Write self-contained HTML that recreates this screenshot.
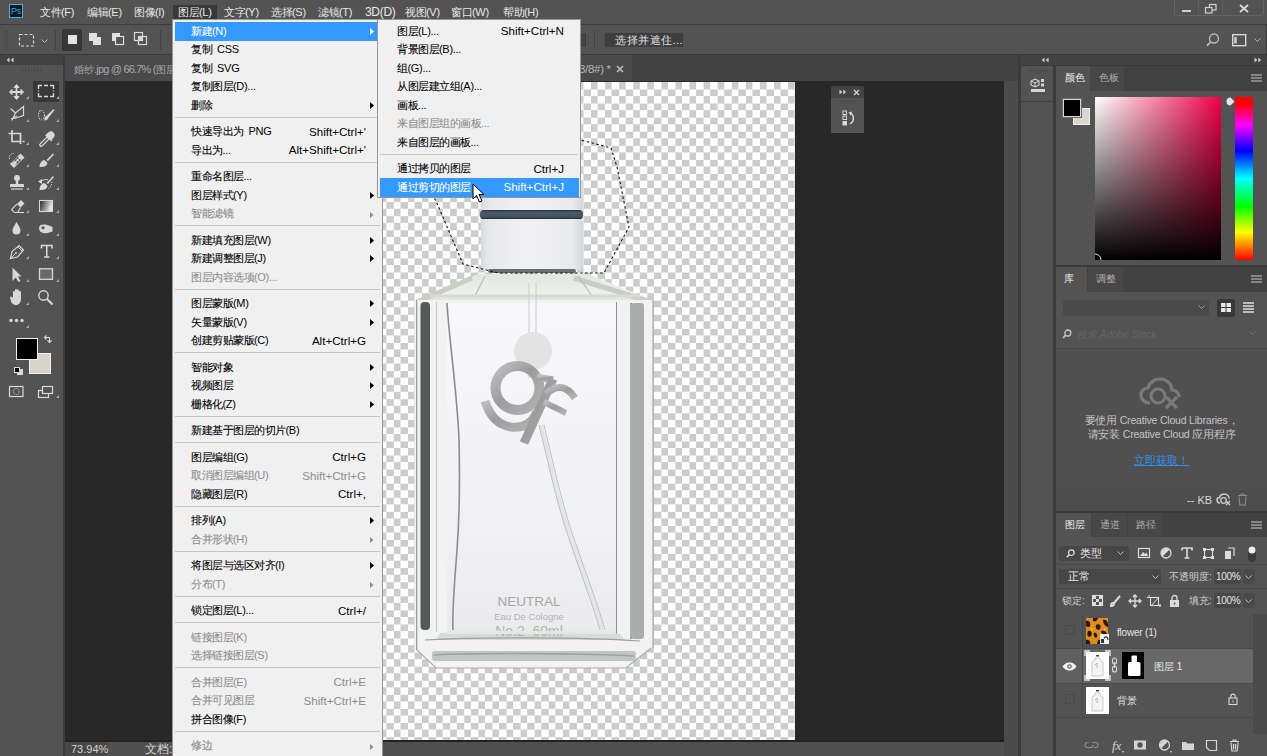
<!DOCTYPE html>
<html><head><meta charset="utf-8">
<style>
*{margin:0;padding:0;box-sizing:border-box}
html,body{width:1267px;height:756px;overflow:hidden;background:#282828;font-family:"Liberation Sans",sans-serif;font-size:12px;color:#dcdcdc}
body{position:relative}
.a{position:absolute}
svg{position:absolute;overflow:visible}
.mb{position:absolute;top:5px;height:14px;line-height:14px;color:#e8e8e8;font-size:11px;letter-spacing:-0.5px;white-space:nowrap}
.mb i{font-style:normal;font-size:11px;letter-spacing:-0.3px}
.cj{font-size:10.6px}
</style></head>
<body>

<!-- menubar -->
<div class="a" style="left:0;top:0;width:1267px;height:24px;background:#535353"></div>
<div class="a" style="left:0;top:24px;width:1267px;height:1px;background:#3d3d3d"></div>
<div class="a" style="left:9px;top:4px;width:14px;height:14px;background:#001a30;border:1px solid #58aed0"></div>
<div class="a" style="left:9px;top:4px;width:14px;height:14px;color:#48a8d4;font-size:9px;line-height:14px;text-align:center;letter-spacing:-0.2px">Ps</div>
<div class="a" style="left:173px;top:5px;width:44px;height:14px;background:#383838"></div>
<div class="mb" style="left:40px">文件<i>(F)</i></div>
<div class="mb" style="left:87px">编辑<i>(E)</i></div>
<div class="mb" style="left:134px">图像<i>(I)</i></div>
<div class="mb" style="left:178px">图层<i>(L)</i></div>
<div class="mb" style="left:224px">文字<i>(Y)</i></div>
<div class="mb" style="left:271px">选择<i>(S)</i></div>
<div class="mb" style="left:318px">滤镜<i>(T)</i></div>
<div class="mb" style="left:365px"><i style="font-size:12px;letter-spacing:-0.3px">3D(D)</i></div>
<div class="mb" style="left:405px">视图<i>(V)</i></div>
<div class="mb" style="left:451px">窗口<i>(W)</i></div>
<div class="mb" style="left:503px">帮助<i>(H)</i></div>
<!-- window controls -->
<div class="a" style="left:1174px;top:-2px;width:90px;height:18px;border:1px solid #656565;border-radius:0 0 3px 3px"></div>
<div class="a" style="left:1198px;top:0;width:1px;height:16px;background:#5f5f5f"></div>
<div class="a" style="left:1222px;top:0;width:1px;height:16px;background:#5f5f5f"></div>
<div class="a" style="left:1182px;top:10px;width:9px;height:2px;background:#d0d0d0"></div>
<svg style="left:1205px;top:4px" width="12" height="10"><rect x="4.5" y="0.5" width="6.5" height="5.5" fill="none" stroke="#d0d0d0" stroke-width="1.2"/><rect x="0.5" y="3.5" width="6.5" height="5.5" fill="#535353" stroke="#d0d0d0" stroke-width="1.2"/></svg>
<svg style="left:1239px;top:4px" width="10" height="9"><path d="M1 1L9 8M9 1L1 8" stroke="#d8d8d8" stroke-width="1.8"/></svg>

<!-- options bar -->
<div class="a" style="left:0;top:25px;width:1266px;height:29px;background:#535353"></div>
<div class="a" style="left:1266px;top:25px;width:1px;height:29px;background:#3a3a3a"></div>
<div class="a" style="left:0;top:54px;width:1267px;height:1px;background:#3a3a3a"></div>
<svg style="left:4px;top:31px" width="4" height="20"><path d="M1 0V20M3 0V20" stroke="#434343" stroke-width="1" stroke-dasharray="1 1"/></svg>
<svg style="left:19px;top:34px" width="16" height="13"><rect x="0.5" y="0.5" width="14" height="11.5" fill="none" stroke="#d6d6d6" stroke-width="1.2" stroke-dasharray="3 2"/></svg>
<svg style="left:41px;top:39px" width="8" height="5"><path d="M0.5 0.5L3.5 3.5L6.5 0.5" fill="none" stroke="#bcbcbc" stroke-width="1"/></svg>
<div class="a" style="left:55px;top:30px;width:1px;height:20px;background:#444"></div>
<div class="a" style="left:62px;top:29px;width:20px;height:22px;background:#383838"></div>
<div class="a" style="left:68px;top:35px;width:9px;height:9px;background:#e2e2e2"></div>
<svg style="left:89px;top:33px" width="14" height="14"><rect x="0" y="0" width="8" height="8" fill="#e0e0e0"/><rect x="4" y="4" width="8" height="8" fill="#e0e0e0"/></svg>
<svg style="left:112px;top:33px" width="14" height="14"><rect x="0" y="0" width="8" height="8" fill="#e0e0e0"/><rect x="3.5" y="3.5" width="8" height="8" fill="#535353" stroke="#e0e0e0" stroke-width="1.2"/></svg>
<svg style="left:134px;top:32px" width="15" height="15"><rect x="0.5" y="0.5" width="8" height="8" fill="none" stroke="#d8d8d8" stroke-width="1.2"/><rect x="4.5" y="4.5" width="8" height="8" fill="none" stroke="#d8d8d8" stroke-width="1.2"/><rect x="4.5" y="4.5" width="4" height="4" fill="#d8d8d8"/></svg>
<div class="a" style="left:160px;top:30px;width:1px;height:20px;background:#444"></div>
<div class="a" style="left:556px;top:33px;width:30px;height:14px;background:#454545;border-right:1px solid #3c3c3c"></div>
<div class="a" style="left:594px;top:30px;width:1px;height:20px;background:#444"></div>
<div class="a" style="left:605px;top:33px;width:78px;height:14px;background:#3e3e3e;border-radius:1px"></div>
<div class="a" style="left:615px;top:33px;height:14px;line-height:14px;font-size:11px;color:#e0e0e0;letter-spacing:0.5px">选择并遮住...</div>
<svg style="left:1206px;top:33px" width="14" height="14"><circle cx="8" cy="5.5" r="4.5" fill="none" stroke="#bdbdbd" stroke-width="1.3"/><path d="M4.8 8.8L1 12.6" stroke="#bdbdbd" stroke-width="1.6"/></svg>
<svg style="left:1232px;top:34px" width="15" height="13"><rect x="0.7" y="0.7" width="13" height="11" fill="none" stroke="#e0e0e0" stroke-width="1.3"/><rect x="2.2" y="3" width="2.5" height="6.5" fill="#cfcfcf"/></svg>
<svg style="left:1254px;top:38px" width="8" height="5"><path d="M0.5 0.5L3.5 3.5L6.5 0.5" fill="none" stroke="#bcbcbc" stroke-width="1"/></svg>

<!-- tools panel -->
<div class="a" style="left:0;top:55px;width:63px;height:701px;background:#535353"></div>
<div class="a" style="left:0;top:55px;width:63px;height:10px;background:#424242"></div>
<div class="a" style="left:63px;top:55px;width:2px;height:701px;background:#3b3b3b"></div>
<svg style="left:6px;top:57px" width="8" height="6"><path d="M3.5 0.5L0.8 3L3.5 5.5ZM7.5 0.5L4.8 3L7.5 5.5Z" fill="#cfcfcf"/></svg>
<svg style="left:22px;top:68px" width="20" height="4"><path d="M0 2H20" stroke="#474747" stroke-width="3" stroke-dasharray="1 2"/></svg>
<div class="a" style="left:33px;top:81px;width:26px;height:21px;background:#383838"></div>
<svg style="left:0;top:0" width="63" height="420" fill="none" stroke="#d8d8d8" stroke-width="1.3">
<g fill="#a8a8a8" stroke="none">
<path d="M26 99h3v-3z"/><path d="M56 99h3v-3z"/>
<path d="M26 122h3v-3z"/><path d="M56 122h3v-3z"/>
<path d="M26 145h3v-3z"/><path d="M56 145h3v-3z"/>
<path d="M26 167h3v-3z"/><path d="M56 167h3v-3z"/>
<path d="M26 190h3v-3z"/><path d="M56 190h3v-3z"/>
<path d="M26 213h3v-3z"/><path d="M56 213h3v-3z"/>
<path d="M26 236h3v-3z"/><path d="M56 236h3v-3z"/>
<path d="M26 259h3v-3z"/><path d="M56 259h3v-3z"/>
<path d="M26 282h3v-3z"/><path d="M56 282h3v-3z"/>
<path d="M26 305h3v-3z"/><path d="M26 328h3v-3z"/><path d="M56 398h3v-3z"/>
</g>
<!-- move -->
<path d="M16.5 87V97M11.5 92H21.5" stroke-width="1.8"/>
<path d="M14 87.5L16.5 84.5L19 87.5ZM14 96.5L16.5 99.5L19 96.5ZM12 89.5L9.5 92L12 94.5ZM21 89.5L23.5 92L21 94.5Z" fill="#d8d8d8" stroke-width="1"/>
<!-- marquee -->
<path d="M38.5 89V85.5H42M50 85.5H53.5V89M53.5 93V96.5H50M42 96.5H38.5V93M44 85.5H48M44 96.5H48M38.5 90.5V91.5M53.5 90.5V91.5" stroke-width="1.4"/>
<!-- lasso polygon -->
<path d="M10.5 108.5L15.5 113L23.5 106.5V115.5L16 118L13.5 118.5" stroke-width="1.2"/>
<path d="M15.5 113L12 120.5M11 119L17 116" stroke-width="1.1"/>
<!-- quick select -->
<ellipse cx="41.5" cy="115" rx="3" ry="4.8" stroke-dasharray="1.3 1.3" stroke-width="1.1"/>
<path d="M44.5 120.5C44 118 45 116.5 47 115.5L53.5 109L54.5 110L49 117C48 119 46.5 120.5 44.5 120.5Z" fill="#d8d8d8" stroke="none"/>
<!-- crop -->
<path d="M12 130V141.5H21.5M8.5 133.5H20.5V144M22.5 141.5H24.5" stroke-width="1.7"/>
<!-- eyedropper -->
<path d="M40.5 143.5L39.5 145L41 146.5L42.5 145.5L49 139L47 137Z" stroke-width="1.2"/>
<path d="M46 135L52 141M48 133.5C49.5 132 51.5 131.5 53 133C54.5 134.5 54 136.5 52.5 138L50.5 140L46 135.5Z" fill="#d8d8d8" stroke-width="1.2"/>
<!-- healing -->
<path d="M10 164L20.5 153.5L24.5 157.5L14 168Z" fill="#d8d8d8" stroke="none"/>
<g fill="#535353" stroke="none"><circle cx="15.5" cy="160" r="0.9"/><circle cx="17.5" cy="158" r="0.9"/><circle cx="17.5" cy="162" r="0.9"/><circle cx="19.5" cy="160" r="0.9"/></g>
<path d="M13 162.5L18.5 157M15.5 165L21 159.5" stroke="#535353" stroke-width="0.8"/>
<path d="M9.5 159C8.5 156 10.5 153.5 13.5 153.5" stroke-dasharray="1.2 1.2" stroke-width="1"/>
<!-- brush -->
<path d="M46.5 160L53 153.5L54 154.5L48 161Z" fill="#d8d8d8" stroke="none"/>
<path d="M39.5 167C39.5 163 41.5 160.5 44.5 160L47.5 163C47 166 44 167.5 39.5 167Z" fill="#d8d8d8" stroke="none"/>
<!-- stamp -->
<circle cx="17" cy="178" r="3" fill="#d8d8d8" stroke="none"/><path d="M17 180V184" stroke-width="2.4"/>
<path d="M11 184H23A1 1 0 0 1 24 185V187H10V185A1 1 0 0 1 11 184Z" fill="#d8d8d8" stroke="none"/><path d="M11 189H23" stroke-width="1.2"/>
<!-- history brush -->
<path d="M46.5 183L53 176L54 177L48 184Z" fill="#d8d8d8" stroke="none"/>
<path d="M39.5 190C39.5 186 41.5 183.5 44.5 183L47.5 186C47 189 44 190.5 39.5 190Z" fill="#d8d8d8" stroke="none"/>
<path d="M38 181.5L42 179V184Z" fill="#d8d8d8" stroke="none"/><path d="M41 181.5C43 179.5 46 179 48 180" stroke-width="1"/>
<path d="M52 182C52 184 51 187 48.5 188.5" stroke-dasharray="1 1.2" stroke-width="1"/>
<!-- eraser -->
<path d="M17 204L21 200L24.5 203.5L20.5 207.5Z" fill="#d8d8d8" stroke="none"/>
<path d="M17 204L11.5 209.5L14.5 212.5H17.5L20.5 207.5" stroke-width="1.1"/><path d="M17.5 212.5H24" stroke-width="1.1"/>
<!-- gradient -->
<defs><linearGradient id="tg" x1="0" x2="1" y1="0" y2="0.3"><stop offset="0" stop-color="#1e1e1e"/><stop offset="1" stop-color="#e8e8e8"/></linearGradient></defs>
<rect x="39.5" y="200.5" width="13" height="11" fill="url(#tg)" stroke="#d8d8d8" stroke-width="1.1"/>
<!-- blur drop -->
<path d="M16.5 222C14 226 12.5 228.5 12.5 230.5A4 4 0 0 0 20.5 230.5C20.5 228.5 19 226 16.5 222Z" fill="#d8d8d8" stroke="none"/>
<!-- smudge -->
<path d="M39 228C39 225 42 224 45 224.5C48 225 50 226 52.5 227V231.5C50 232.5 47 233.5 43 233C40.5 232.5 39 230.5 39 228Z" fill="#d8d8d8" stroke="none"/><circle cx="43" cy="227.8" r="1.6" fill="#535353" stroke="none"/>
<!-- pen -->
<path d="M10.5 258.5L12 251.5L19 245.5L23.5 250L17.5 257Z" stroke-width="1.2"/><path d="M18 247L22 251M10.5 258.5L15.5 253.5" stroke-width="1"/><circle cx="16" cy="253" r="1" fill="#d8d8d8" stroke="none"/>
<!-- type -->
<path d="M41 245.5H52.5M41.5 245V248.5M52 245V248.5M46.75 245.5V257M44 257H49.5" stroke-width="1.6"/>
<!-- path select -->
<path d="M12.5 267.5V281L15.8 277.5L18.5 282L20.5 281L17.8 276.5H21.5Z" fill="#d8d8d8" stroke="none"/>
<!-- rectangle -->
<rect x="39.5" y="268.8" width="13" height="10.5" fill="#6a6a6a" stroke="#d8d8d8" stroke-width="1.3"/>
<!-- hand -->
<path d="M10 297C11 296 12 296.5 13 298V292C13 290.5 15 290.5 15 292V290C15 288.5 17 288.5 17 290V290.5C17 289 19 289 19 290.5V292C19 290.8 21 290.8 21 292V299C21 302.5 19 305 16 305C13.5 305 12 303.5 11 301.5Z" fill="#d8d8d8" stroke="none"/>
<!-- zoom -->
<circle cx="43.5" cy="295.5" r="4.7" stroke-width="1.4"/><path d="M47 299L52.5 304.5" stroke-width="2"/>
<!-- dots -->
<g fill="#d8d8d8" stroke="none"><circle cx="11" cy="320.5" r="1.7"/><circle cx="16.5" cy="320.5" r="1.7"/><circle cx="22" cy="320.5" r="1.7"/></g>
<!-- swap -->
<path d="M44.5 337.5H49.5V342.5" stroke-width="1.1"/><path d="M46.5 335.5L44.5 337.5L46.5 339.5M47.5 340.5L49.5 342.5L51.5 340.5" stroke-width="1.1"/>
<!-- default colors -->
<rect x="17" y="369" width="6" height="6" fill="#d8d8d8" stroke="none"/><rect x="14.5" y="367.5" width="5" height="5" fill="#000" stroke="#d8d8d8" stroke-width="1"/>
<!-- quick mask -->
<rect x="9.5" y="386.5" width="13.5" height="10" stroke-width="1.2"/><circle cx="16.25" cy="391.5" r="3" stroke-dasharray="1 1" stroke-width="1"/>
<!-- screen mode -->
<rect x="38.5" y="390.5" width="10" height="7" stroke-width="1.2"/><rect x="42.5" y="386.5" width="10" height="7" fill="#535353" stroke-width="1.2"/>
</svg>
<div class="a" style="left:29px;top:353px;width:22px;height:21px;background:#d9d4cb;border:1px solid #f2f2f2"></div>
<div class="a" style="left:16px;top:338px;width:22px;height:22px;background:#000;border:1px solid #f0f0f0"></div>

<!-- document tab bar & status -->
<div class="a" style="left:65px;top:55px;width:953px;height:26px;background:#424242"></div>
<div class="a" style="left:65px;top:55px;width:567px;height:26px;background:#4a4a4a"></div>
<div class="a" style="left:74px;top:62px;height:14px;line-height:14px;font-size:11px;letter-spacing:-0.8px;color:#a8a8a8;white-space:nowrap"><span style="font-size:10px;letter-spacing:0">婚纱</span>.jpg @ 66.7% (<span style="font-size:10px;letter-spacing:0">图层</span> 1, RGB/8#) *</div>
<div class="a" style="left:579px;top:62px;height:14px;line-height:14px;font-size:11.5px;letter-spacing:-0.3px;color:#b4b4b4;white-space:nowrap">3/8#) *</div>
<svg style="left:616px;top:65px" width="8" height="8"><path d="M1 1L7 7M7 1L1 7" stroke="#bdbdbd" stroke-width="1.6"/></svg>
<div class="a" style="left:1004px;top:81px;width:14px;height:675px;background:#4b4b4b"></div>
<div class="a" style="left:65px;top:740px;width:939px;height:2px;background:#222"></div>
<div class="a" style="left:65px;top:742px;width:939px;height:14px;background:#505050"></div>
<div class="a" style="left:65px;top:742px;width:42px;height:14px;background:#474747"></div>
<div class="a" style="left:71px;top:742px;height:14px;line-height:14px;font-size:11px;color:#d4d4d4">73.94%</div>
<div class="a" style="left:145px;top:742px;height:14px;line-height:14px;font-size:12px;color:#d4d4d4;white-space:nowrap">文档:2.00M/2.00M</div>
<!-- floating history panel -->
<div class="a" style="left:831px;top:86px;width:33px;height:47px;background:#535353;border-radius:3px 3px 0 0"></div>
<div class="a" style="left:831px;top:86px;width:33px;height:12px;background:#434343;border-radius:3px 3px 0 0"></div>
<svg style="left:839px;top:89px" width="8" height="6"><path d="M0.5 0.5L3.3 3L0.5 5.5ZM4.3 0.5L7.1 3L4.3 5.5Z" fill="#d0d0d0"/></svg>
<svg style="left:853px;top:89px" width="7" height="7"><path d="M1 1L6 6M6 1L1 6" stroke="#d0d0d0" stroke-width="1.4"/></svg>
<svg style="left:837px;top:100px" width="20" height="4"><path d="M0 2H20" stroke="#484848" stroke-width="3" stroke-dasharray="1 2"/></svg>
<svg style="left:842px;top:110px" width="16" height="17"><rect x="1" y="1" width="3.5" height="3.5" fill="none" stroke="#d8d8d8" stroke-width="1"/><rect x="1" y="6" width="3.5" height="3.5" fill="none" stroke="#d8d8d8" stroke-width="1"/><rect x="0.5" y="11" width="4.5" height="4.5" fill="#d8d8d8"/><path d="M8 14C11 12 12 9 11 6C10.5 4.5 9.5 3.5 8.5 3.2" fill="none" stroke="#d8d8d8" stroke-width="1.5"/><path d="M6.5 2.5L10 1.5L9 5.5Z" fill="#d8d8d8"/></svg>

<!-- canvas -->
<div class="a" style="left:273px;top:82px;width:522px;height:658px;background:conic-gradient(#cccccc 25%,#ffffff 0 50%,#cccccc 0 75%,#ffffff 0);background-size:14.08px 14.08px;background-position:0.78px 0"></div>
<svg style="left:273px;top:82px" width="522" height="658" viewBox="273 82 522 658">
<defs>
<linearGradient id="capg" x1="0" x2="1"><stop offset="0" stop-color="#d9dadd"/><stop offset="0.08" stop-color="#e8e9eb"/><stop offset="0.45" stop-color="#f1f1f3"/><stop offset="0.9" stop-color="#e9eaec"/><stop offset="1" stop-color="#d5d6d8"/></linearGradient>
<linearGradient id="bandg" x1="0" x2="0" y1="0" y2="1"><stop offset="0" stop-color="#2a3038"/><stop offset="0.25" stop-color="#4a5868"/><stop offset="0.7" stop-color="#465464"/><stop offset="1" stop-color="#1e242a"/></linearGradient>
<linearGradient id="faceg" x1="0" x2="0" y1="0" y2="1"><stop offset="0" stop-color="#f8f8fa"/><stop offset="0.6" stop-color="#f2f2f4"/><stop offset="1" stop-color="#ebebed"/></linearGradient>
<linearGradient id="shg" x1="0" x2="0" y1="0" y2="1"><stop offset="0" stop-color="#e2e5e0"/><stop offset="0.7" stop-color="#eef0ec"/><stop offset="1" stop-color="#dfe2dc"/></linearGradient>
<linearGradient id="baseg" x1="0" x2="0" y1="0" y2="1"><stop offset="0" stop-color="#e4e6e4"/><stop offset="0.2" stop-color="#c9ccca"/><stop offset="0.4" stop-color="#eef0ee"/><stop offset="0.6" stop-color="#aeb3b1"/><stop offset="0.8" stop-color="#e2e5e2"/><stop offset="1" stop-color="#cfd3d0"/></linearGradient>
<linearGradient id="logog" x1="0" x2="1" y1="0" y2="1"><stop offset="0" stop-color="#c0c0c0"/><stop offset="0.45" stop-color="#9c9c9c"/><stop offset="1" stop-color="#b4b4b4"/></linearGradient>
</defs>
<!-- cap -->
<rect x="481" y="180" width="102" height="32" fill="url(#capg)"/>
<rect x="480" y="210" width="103" height="9.5" rx="4" fill="url(#bandg)"/>
<rect x="481" y="219" width="102" height="51" rx="3" fill="url(#capg)"/>
<rect x="488" y="269" width="88" height="4" rx="2" fill="#6a6e70"/>
<!-- shoulder -->
<path d="M478 274H588L654 301H415Z" fill="url(#shg)"/>
<path d="M472 278L417 302" stroke="#c9cdc3" stroke-width="5"/>
<path d="M574 278L651 302" stroke="#c9cdc3" stroke-width="5"/>
<path d="M485 276L475 296M578 276L592 296" stroke="#b8bcb4" stroke-width="1.2"/>
<path d="M430 296H640" stroke="#d8dbd5" stroke-width="3"/>
<!-- body base fill -->
<path d="M415 300H654V648L651 648L626 668H436L417 650L415 650Z" fill="#f1f2f1"/>
<!-- left side -->
<rect x="416" y="300" width="1.3" height="350" fill="#9a9d9b"/>
<rect x="420.5" y="302" width="9.5" height="328" rx="4" fill="#555957"/>
<rect x="436" y="302" width="1" height="330" fill="#c4c6c4"/>
<!-- right side -->
<rect x="616" y="302" width="1" height="334" fill="#8d908e"/>
<rect x="630.5" y="303" width="1.2" height="336" fill="#6a6d6b"/>
<rect x="631" y="303" width="13" height="336" rx="3" fill="#aaadac"/>
<rect x="652.5" y="300" width="1.2" height="348" fill="#9a9d9b"/>
<!-- front face -->
<rect x="447" y="303" width="169" height="330" fill="url(#faceg)"/>
<path d="M447 303C449 340 457 390 459 440C460 480 460 510 457 550C454 590 452 610 453 630" fill="none" stroke="#8b8e8c" stroke-width="1.6"/>
<!-- base -->
<path d="M440 633C480 630 590 630 620 634L625 640H436Z" fill="#d9dbd9"/>
<path d="M425 640C480 637 580 637 640 641" stroke="#9aa09d" stroke-width="1.2" fill="none"/>
<rect x="432" y="651" width="204" height="10" rx="3" fill="#c0c6c4"/>
<path d="M434 655C480 653 590 653 634 656" stroke="#9aa3a1" stroke-width="1.5" fill="none"/>
<path d="M436 664H628" stroke="#f6f8f6" stroke-width="2.5"/>
<path d="M417 650L436 668H626L651 648" fill="none" stroke="#a9aeab" stroke-width="1.2"/>
<!-- tube -->
<path d="M529 283V378M536 283V378" stroke="#c9cbcc" stroke-width="1"/>
<path d="M541 425C552 470 560 510 575 550C585 580 595 605 602 630" stroke="#e4e5e6" stroke-width="4" fill="none"/><path d="M539 425C550 470 558 510 573 550C583 580 593 605 600 630M544 425C555 470 563 510 578 550C588 580 598 605 605 630" stroke="#b9bbbc" stroke-width="0.9" fill="none"/>
<!-- circle -->
<circle cx="533" cy="351" r="19" fill="#e3e3e4"/>
<!-- logo gf -->
<g fill="none" stroke="url(#logog)" stroke-linecap="butt">
<circle cx="517.5" cy="388" r="22" stroke-width="10"/>
<path d="M537 377L553 380" stroke-width="7"/>
<path d="M537 412Q530 429 511 427Q492 424 485 401" stroke-width="9"/>
<path d="M524 443L553 379" stroke-width="9"/>
<path d="M546 394Q562 379 575 398" stroke-width="7"/>
<path d="M544 402L566 413" stroke-width="6"/>
</g>
<!-- label text -->
<g font-family="Liberation Sans" text-anchor="middle">
<text x="529" y="606" font-size="13.5" fill="#a8a8a8">NEUTRAL</text>
<text x="529" y="620" font-size="9.5" fill="#b4b4b4">Eau De Cologne</text>
<text x="529" y="636" font-size="14" fill="#b4b4b4" xml:space="preserve">No.2  60ml</text>
</g>
<rect x="447" y="631" width="169" height="3" fill="#e6e8e6"/>
<!-- marching ants -->
<path d="M577 139L611 148L617 167L629 227L604 273L498 273L463 264L436 201L425 180" fill="none" stroke="#111" stroke-width="1.1" stroke-dasharray="2.5 2.5"/>
</svg>

<!-- right dock -->
<div class="a" style="left:1018px;top:55px;width:249px;height:701px;background:#3a3a3a"></div>
<div class="a" style="left:1020px;top:55px;width:247px;height:10px;background:#424242"></div>
<svg style="left:1041px;top:57px" width="8" height="6"><path d="M3.5 0.5L0.8 3L3.5 5.5ZM7.5 0.5L4.8 3L7.5 5.5Z" fill="#cfcfcf"/></svg>
<svg style="left:1254px;top:57px" width="8" height="6"><path d="M0.5 0.5L3.3 3L0.5 5.5ZM4.3 0.5L7.1 3L4.3 5.5Z" fill="#cfcfcf"/></svg>
<!-- icon column -->
<div class="a" style="left:1021px;top:66px;width:32px;height:690px;background:#535353"></div>
<div class="a" style="left:1021px;top:101px;width:32px;height:1px;background:#3e3e3e"></div>
<svg style="left:1028px;top:69px" width="20" height="4"><path d="M0 2H20" stroke="#474747" stroke-width="3" stroke-dasharray="1 2"/></svg>
<svg style="left:1030px;top:78px" width="16" height="16"><path d="M5 1L9 3V7L5 9L1 7V3Z" fill="none" stroke="#d6d6d6" stroke-width="1.1"/><path d="M1 3L5 5L9 3M5 5V9" fill="none" stroke="#d6d6d6" stroke-width="1"/><rect x="11" y="1" width="3" height="3" fill="#d6d6d6"/><rect x="11" y="5.5" width="3" height="3" fill="#d6d6d6"/><rect x="1" y="11" width="14" height="3" fill="#d6d6d6"/></svg>
<!-- color panel -->
<div class="a" style="left:1056px;top:66px;width:211px;height:199px;background:#535353"></div>
<div class="a" style="left:1056px;top:66px;width:211px;height:25px;background:#424242"></div>
<div class="a" style="left:1056px;top:66px;width:34px;height:25px;background:#535353"></div>
<div class="a" style="left:1091px;top:66px;width:33px;height:25px;background:#474747"></div>
<div class="a" style="left:1065px;top:72px;line-height:12px;font-size:10px;color:#f0f0f0">颜色</div>
<div class="a" style="left:1099px;top:72px;line-height:12px;font-size:10px;color:#b0b0b0">色板</div>
<svg style="left:1251px;top:74px" width="11" height="8"><path d="M0 1H11M0 4H11M0 7H11" stroke="#c8c8c8" stroke-width="1.2"/></svg>
<div class="a" style="left:1073px;top:108px;width:17px;height:17px;background:#dbd6cd;border:1px solid #f0f0f0"></div>
<div class="a" style="left:1063px;top:99px;width:18px;height:18px;background:#000;border:1px solid #d8d8d8;box-shadow:0 0 0 1px #6a6a6a"></div>
<div class="a" style="left:1095px;top:97px;width:126px;height:163px;background:linear-gradient(to bottom,rgba(0,0,0,0),#000),linear-gradient(to right,#fff,#f0004a)"></div>
<svg style="left:1093px;top:252px" width="10" height="10"><path d="M2 2A6 6 0 0 1 8 8" fill="none" stroke="#e0e0e0" stroke-width="1"/></svg>
<div class="a" style="left:1235px;top:97px;width:18px;height:163px;background:linear-gradient(to bottom,#ff0000 0%,#ff0000 4%,#ff00ff 17%,#0000ff 33%,#00ffff 50%,#00ff00 67%,#ffff00 83%,#ff0000 100%)"></div>
<svg style="left:1227px;top:97px" width="8" height="9"><path d="M3.5 0.5A3.8 3.8 0 0 0 3.5 8.5L7.5 4.5Z" fill="#e4e4e4"/></svg>
<!-- libraries panel -->
<div class="a" style="left:1056px;top:267px;width:211px;height:244px;background:#535353"></div>
<div class="a" style="left:1056px;top:267px;width:211px;height:25px;background:#424242"></div>
<div class="a" style="left:1056px;top:267px;width:31px;height:25px;background:#535353"></div>
<div class="a" style="left:1088px;top:267px;width:35px;height:25px;background:#474747"></div>
<div class="a" style="left:1064px;top:273px;line-height:12px;font-size:10px;color:#f0f0f0">库</div>
<div class="a" style="left:1096px;top:273px;line-height:12px;font-size:10px;color:#b0b0b0">调整</div>
<svg style="left:1251px;top:275px" width="11" height="8"><path d="M0 1H11M0 4H11M0 7H11" stroke="#c8c8c8" stroke-width="1.2"/></svg>
<div class="a" style="left:1063px;top:300px;width:146px;height:16px;background:#4a4a4a;border-radius:2px"></div>
<svg style="left:1198px;top:305px" width="8" height="5"><path d="M0.5 0.5L3.5 3.5L6.5 0.5" fill="none" stroke="#9a9a9a" stroke-width="1"/></svg>
<div class="a" style="left:1217px;top:299px;width:18px;height:18px;background:#383838;border-radius:2px"></div>
<svg style="left:1221px;top:303px" width="11" height="10"><rect x="0" y="0" width="4.5" height="4" fill="#e8e8e8"/><rect x="5.5" y="0" width="4.5" height="4" fill="#e8e8e8"/><rect x="0" y="5" width="4.5" height="4" fill="#e8e8e8"/><rect x="5.5" y="5" width="4.5" height="4" fill="#e8e8e8"/></svg>
<svg style="left:1243px;top:302px" width="11" height="11"><path d="M0 1H11M0 4H11M0 7H11M0 10H11" stroke="#e0e0e0" stroke-width="1.5"/></svg>
<div class="a" style="left:1056px;top:322px;width:211px;height:27px;background:#535353;border-bottom:1px solid #474747"></div>
<svg style="left:1062px;top:329px" width="10" height="10"><circle cx="5.8" cy="4" r="3" fill="none" stroke="#c8c8c8" stroke-width="1.3"/><path d="M3.8 6L1 9" stroke="#c8c8c8" stroke-width="1.6"/></svg>
<div class="a" style="left:1077px;top:328px;line-height:13px;font-size:10px;color:#656565;font-style:italic;white-space:nowrap">搜索 Adobe Stock</div>
<svg style="left:1249px;top:331px" width="8" height="5"><path d="M0.5 0.5L3.5 3.5L6.5 0.5" fill="none" stroke="#777" stroke-width="1"/></svg>
<div class="a" style="left:1056px;top:349px;width:211px;height:140px;background:#505050"></div>
<svg style="left:1139px;top:377px" width="44" height="34"><path d="M11 26C5 26 2 22 2 18C2 14 5 11 9 11C10 6 15 2 21 2C28 2 33 7 33 13C37 13 40 16 40 20" fill="none" stroke="#7a7a7a" stroke-width="3.2"/><circle cx="19" cy="19" r="7" fill="none" stroke="#7a7a7a" stroke-width="3"/><path d="M27 20L38 31M38 20L27 31" stroke="#7a7a7a" stroke-width="3.2"/></svg>
<div class="a" style="left:1056px;top:413px;width:211px;line-height:14px;font-size:10.5px;letter-spacing:-0.2px;color:#c4c4c4;text-align:center;white-space:nowrap">要使用 Creative Cloud Libraries，</div>
<div class="a" style="left:1056px;top:427px;width:211px;line-height:14px;font-size:10.5px;letter-spacing:-0.2px;color:#c4c4c4;text-align:center;white-space:nowrap">请安装 Creative Cloud 应用程序</div>
<div class="a" style="left:1134px;top:454px;line-height:13px;font-size:11px;color:#2f8fee;text-decoration:underline;white-space:nowrap">立即获取！</div>
<div class="a" style="left:1056px;top:489px;width:211px;height:22px;background:#4d4d4d"></div>
<div class="a" style="left:1187px;top:494px;line-height:12px;font-size:11px;color:#d8d8d8;white-space:nowrap">-- KB</div>
<svg style="left:1216px;top:493px" width="16" height="13"><path d="M4 10C2 10 1 8.5 1 7C1 5.5 2 4.5 3.5 4.5C4 2.5 6 1 8.5 1C11 1 13 3 13 5.5" fill="none" stroke="#cfcfcf" stroke-width="1.5"/><circle cx="7.5" cy="7.5" r="2.8" fill="none" stroke="#cfcfcf" stroke-width="1.3"/><path d="M10 8L14 12M14 8L10 12" stroke="#cfcfcf" stroke-width="1.4"/></svg>
<svg style="left:1237px;top:493px" width="11" height="13"><path d="M1 2.5H10M4 2.5V1H7V2.5M2 3.5L2.8 12H8.2L9 3.5" fill="none" stroke="#8a8a8a" stroke-width="1.1"/></svg>
<!-- layers panel -->
<div class="a" style="left:1056px;top:513px;width:211px;height:243px;background:#535353"></div>
<div class="a" style="left:1056px;top:513px;width:211px;height:24px;background:#424242"></div>
<div class="a" style="left:1056px;top:513px;width:35px;height:24px;background:#535353"></div>
<div class="a" style="left:1092px;top:513px;width:35px;height:24px;background:#474747"></div>
<div class="a" style="left:1128px;top:513px;width:34px;height:24px;background:#474747"></div>
<div class="a" style="left:1065px;top:519px;line-height:12px;font-size:10px;color:#f0f0f0">图层</div>
<div class="a" style="left:1100px;top:519px;line-height:12px;font-size:10px;color:#b0b0b0">通道</div>
<div class="a" style="left:1136px;top:519px;line-height:12px;font-size:10px;color:#b0b0b0">路径</div>
<svg style="left:1251px;top:521px" width="11" height="8"><path d="M0 1H11M0 4H11M0 7H11" stroke="#c8c8c8" stroke-width="1.2"/></svg>
<div class="a" style="left:1059px;top:546px;width:70px;height:15px;background:#474747;border-radius:2px"></div>
<svg style="left:1066px;top:549px" width="9" height="9"><circle cx="5.3" cy="3.7" r="2.8" fill="none" stroke="#e0e0e0" stroke-width="1.2"/><path d="M3.5 5.5L0.8 8.2" stroke="#e0e0e0" stroke-width="1.5"/></svg>
<div class="a" style="left:1080px;top:547px;line-height:13px;font-size:10.5px;color:#e8e8e8">类型</div>
<svg style="left:1117px;top:551px" width="8" height="5"><path d="M0.5 0.5L3.5 3.5L6.5 0.5" fill="none" stroke="#bdbdbd" stroke-width="1"/></svg>
<svg style="left:1137px;top:546px" width="125" height="16" fill="none" stroke="#dcdcdc">
<rect x="1.5" y="2.5" width="11" height="9" stroke-width="1.2"/><path d="M3 10L6 6L8 8L9.5 6.5L11 10Z" fill="#dcdcdc" stroke="none"/>
<circle cx="29" cy="7" r="5" stroke-width="1.3"/><path d="M25.5 10.5A5 5 0 0 1 32.5 3.5Z" fill="#dcdcdc" stroke="none"/>
<path d="M45 2H55V4.5M45 2V4.5M50 2V12M47.5 12H52.5" stroke-width="1.6"/>
<rect x="67.5" y="3.5" width="8" height="8" stroke-width="1.1"/><rect x="66" y="2" width="3" height="3" fill="#dcdcdc" stroke="none"/><rect x="74" y="2" width="3" height="3" fill="#dcdcdc" stroke="none"/><rect x="66" y="10" width="3" height="3" fill="#dcdcdc" stroke="none"/><rect x="74" y="10" width="3" height="3" fill="#dcdcdc" stroke="none"/>
<path d="M88 5H94V13H88Z" fill="#dcdcdc" stroke="none"/><path d="M91 2H97V10" stroke-width="1.2"/>
<rect x="111" y="0" width="8" height="16" rx="4" fill="#3a3a3a" stroke="none"/><circle cx="115" cy="4" r="3.5" fill="#f0f0f0" stroke="none"/>
</svg>
<div class="a" style="left:1056px;top:564px;width:211px;height:1px;background:#484848"></div>
<div class="a" style="left:1056px;top:588px;width:211px;height:1px;background:#484848"></div>
<div class="a" style="left:1059px;top:569px;width:102px;height:15px;background:#474747;border-radius:2px"></div>
<div class="a" style="left:1068px;top:570px;line-height:13px;font-size:10.5px;color:#e8e8e8">正常</div>
<svg style="left:1152px;top:575px" width="8" height="5"><path d="M0.5 0.5L3.5 3.5L6.5 0.5" fill="none" stroke="#bdbdbd" stroke-width="1"/></svg>
<div class="a" style="left:1169px;top:570px;line-height:13px;font-size:10px;color:#cfcfcf;white-space:nowrap">不透明度:</div>
<div class="a" style="left:1214px;top:569px;width:27px;height:15px;background:#474747;border-radius:2px"></div>
<div class="a" style="left:1243px;top:569px;width:12px;height:15px;background:#4a4a4a;border-radius:2px"></div>
<div class="a" style="left:1216px;top:570px;line-height:13px;font-size:10px;letter-spacing:-0.3px;color:#e8e8e8">100%</div>
<svg style="left:1245px;top:575px" width="8" height="5"><path d="M0.5 0.5L3.5 3.5L6.5 0.5" fill="none" stroke="#bdbdbd" stroke-width="1"/></svg>
<div class="a" style="left:1062px;top:594px;line-height:13px;font-size:10px;color:#cfcfcf">锁定:</div>
<svg style="left:1091px;top:594px" width="95" height="14" fill="none" stroke="#dcdcdc">
<rect x="1.5" y="1.5" width="10" height="10" stroke-width="1.1"/><path d="M2 2h3v3h-3zM8 2h3v3h-3zM5 5h3v3h-3zM2 8h3v3h-3zM8 8h3v3h-3z" fill="#dcdcdc" stroke="none"/>
<path d="M20 12C20 10 21 9 22 9L23 10C23 11 21.5 12.5 20 12ZM23 9L29 2" stroke-width="2"/>
<path d="M44 1V13M38 7H50M42 3L44 1L46 3M42 11L44 13L46 11M40 5L38 7L40 9M48 5L50 7L48 9" stroke-width="1.3"/>
<rect x="59.5" y="3.5" width="8" height="8" stroke-width="1.1"/><path d="M58 1V4M69 10V13M56 3.5H59M67 11.5H70M60 12L68 3" stroke-width="1"/>
<rect x="79" y="6" width="9" height="7" fill="#dcdcdc" stroke="none"/><path d="M81 6V4A2.5 2.5 0 0 1 86 4V6" stroke-width="1.3"/><rect x="82.8" y="8.5" width="1.5" height="2" fill="#535353" stroke="none"/>
</svg>
<div class="a" style="left:1189px;top:594px;line-height:13px;font-size:10px;color:#cfcfcf">填充:</div>
<div class="a" style="left:1214px;top:593px;width:27px;height:15px;background:#474747;border-radius:2px"></div>
<div class="a" style="left:1243px;top:593px;width:12px;height:15px;background:#4a4a4a;border-radius:2px"></div>
<div class="a" style="left:1216px;top:594px;line-height:13px;font-size:10px;letter-spacing:-0.3px;color:#e8e8e8">100%</div>
<svg style="left:1245px;top:599px" width="8" height="5"><path d="M0.5 0.5L3.5 3.5L6.5 0.5" fill="none" stroke="#bdbdbd" stroke-width="1"/></svg>
<!-- layer list -->
<div class="a" style="left:1056px;top:614px;width:197px;height:120px;background:#535353"></div>
<div class="a" style="left:1253px;top:614px;width:14px;height:120px;background:#4a4a4a"></div>
<div class="a" style="left:1056px;top:615px;width:197px;height:34px;background:#535353;border-bottom:1px solid #484848"></div>
<div class="a" style="left:1056px;top:649px;width:197px;height:35px;background:#686868;border-bottom:1px solid #4a4a4a"></div>
<div class="a" style="left:1056px;top:649px;width:26px;height:34px;background:#606060"></div>
<div class="a" style="left:1056px;top:684px;width:197px;height:34px;background:#535353;border-bottom:1px solid #484848"></div>
<div class="a" style="left:1082px;top:615px;width:1px;height:103px;background:#474747"></div>
<div class="a" style="left:1065px;top:625px;width:10px;height:10px;border:1px solid #4a4a4a"></div>
<div class="a" style="left:1065px;top:694px;width:10px;height:10px;border:1px solid #4a4a4a"></div>
<svg style="left:1062px;top:662px" width="15" height="9"><path d="M0.5 4.5C3 1 5 0.5 7.5 0.5C10 0.5 12 1 14.5 4.5C12 8 10 8.5 7.5 8.5C5 8.5 3 8 0.5 4.5Z" fill="#f0f0f0"/><circle cx="7.5" cy="4.5" r="2.3" fill="#686868"/><circle cx="7.5" cy="4.5" r="1.1" fill="#f0f0f0"/></svg>
<div class="a" style="left:1086px;top:618px;width:22px;height:26px;background:#e08c20"></div>
<svg style="left:1086px;top:618px" width="22" height="26"><g fill="#2a1a0c"><path d="M0 3C3 2 5 5 4 8C3 10 0 9 0 7Z"/><path d="M7 0H12C11 3 9 4 7 3Z"/><path d="M10 7C13 5 16 8 14 11C12 13 9 11 10 7Z"/><path d="M17 2C19 1 22 3 22 6V9C20 9 17 6 17 2Z"/><path d="M2 13C5 12 7 15 5 18C3 20 0 18 2 13Z"/><path d="M8 15C10 14 12 17 11 19C9 21 7 18 8 15Z"/><path d="M15 13C18 12 22 14 20 17C18 18 15 16 15 13Z"/><path d="M0 22C3 21 5 24 4 26H0Z"/><path d="M12 22C14 21 16 24 15 26H11Z"/></g><g fill="#f5b040"><circle cx="6" cy="11" r="1.5"/><circle cx="16" cy="20" r="1.5"/><circle cx="19" cy="11" r="1.2"/></g></svg>
<div class="a" style="left:1100px;top:634px;width:9px;height:10px;background:#f0f0f0"></div>
<svg style="left:1100px;top:634px" width="9" height="10"><rect x="1" y="5" width="3" height="4" fill="#333"/><path d="M4 4C6 2 8 3 8 6" fill="none" stroke="#333" stroke-width="1.2"/></svg>
<div class="a" style="left:1117px;top:626px;line-height:13px;font-size:10px;letter-spacing:-0.2px;color:#e4e4e4;white-space:nowrap">flower (1)</div>
<div class="a" style="left:1086px;top:652px;width:23px;height:27px;background:#fff"></div>
<svg style="left:1084px;top:650px" width="27" height="31"><path d="M1 6V1H6M21 1H26V6M26 25V30H21M6 30H1V25" fill="none" stroke="#e8e8e8" stroke-width="1.3"/><rect x="12" y="5" width="3" height="1.5" fill="#444"/><path d="M11 8H16V10L19 12V26H8V12L11 10Z" fill="#f4f4f4" stroke="#c0c0c0" stroke-width="0.8"/><path d="M11 15L13 13L13 18" fill="none" stroke="#aaa" stroke-width="0.8"/></svg>
<svg style="left:1111px;top:657px" width="7" height="16"><rect x="1.5" y="1" width="4" height="6" rx="2" fill="none" stroke="#d8d8d8" stroke-width="1.1"/><rect x="1.5" y="9" width="4" height="6" rx="2" fill="none" stroke="#d8d8d8" stroke-width="1.1"/><path d="M3.5 5V11" stroke="#d8d8d8" stroke-width="1"/></svg>
<div class="a" style="left:1122px;top:652px;width:22px;height:27px;background:#000"></div>
<svg style="left:1122px;top:652px" width="22" height="27"><rect x="9.5" y="3.5" width="5.5" height="7" rx="1" fill="#fff"/><path d="M7.5 10H17A1.5 1.5 0 0 1 18.5 11.5V22.5A1.5 1.5 0 0 1 17 24H7.5A1.5 1.5 0 0 1 6 22.5V11.5A1.5 1.5 0 0 1 7.5 10Z" fill="#fff"/></svg>
<div class="a" style="left:1154px;top:660px;line-height:13px;font-size:10px;color:#e8e8e8;white-space:nowrap">图层 1</div>
<div class="a" style="left:1086px;top:687px;width:23px;height:27px;background:#fff"></div>
<svg style="left:1086px;top:687px" width="23" height="27"><rect x="10" y="3" width="3" height="1.5" fill="#444"/><path d="M9 6H14V8L17 10V24H6V10L9 8Z" fill="#f4f4f4" stroke="#c0c0c0" stroke-width="0.8"/><path d="M9 13L11 11L11 16" fill="none" stroke="#aaa" stroke-width="0.8"/></svg>
<div class="a" style="left:1117px;top:694px;line-height:13px;font-size:10px;color:#e0e0e0">背景</div>
<svg style="left:1228px;top:693px" width="10" height="12"><rect x="1" y="5" width="8" height="6.5" fill="none" stroke="#d8d8d8" stroke-width="1.1"/><path d="M2.8 5V3.3A2.2 2.2 0 0 1 7.2 3.3V5" fill="none" stroke="#d8d8d8" stroke-width="1.1"/><rect x="4.5" y="7.5" width="1" height="2" fill="#d8d8d8"/></svg>
<!-- layers footer -->
<div class="a" style="left:1056px;top:734px;width:211px;height:22px;background:#535353"></div>
<svg style="left:1084px;top:738px" width="170" height="16" fill="none" stroke="#d4d4d4">
<path d="M5 7.5H3.5A2.5 2.5 0 0 0 3.5 12.5H6.5A2.5 2.5 0 0 0 9 10M8 7.5H11.5A2.5 2.5 0 0 1 11.5 12.5H10" stroke="#8c8c8c" stroke-width="1.2" transform="translate(0,-3)"/>
<text x="28" y="12" font-family="Liberation Serif" font-style="italic" font-size="13" fill="#d4d4d4" stroke="none">fx</text>
<path d="M38 13L40 13L39 15Z" fill="#d4d4d4" stroke="none"/>
<rect x="50" y="2.5" width="12" height="9" fill="#d4d4d4" stroke="none"/><circle cx="56" cy="7" r="2.7" fill="#535353" stroke="none"/>
<circle cx="80.5" cy="7" r="5" stroke-width="1.3"/><path d="M77 10.5A5 5 0 0 1 84 3.5Z" fill="#d4d4d4" stroke="none"/><path d="M86 13L88 13L87 15Z" fill="#d4d4d4" stroke="none"/>
<path d="M98 4H102L103.5 5.5H110V12H98Z" fill="#d4d4d4" stroke="none"/>
<path d="M122.5 2.5H132.5V12.5H125.5L122.5 9.5Z" stroke-width="1.2"/>
<path d="M146 3.5H155M149 3.5V2H152V3.5M147 4.5L147.8 13H153.2L154 4.5M149.5 6V11.5M151.5 6V11.5" stroke-width="1.2"/>
</svg>

<!-- menus -->
<style>.mt{position:absolute;height:14px;line-height:14px;font-size:11px;letter-spacing:-0.3px;white-space:nowrap}.mt b{font-weight:normal;font-size:11px;letter-spacing:-0.5px;-webkit-text-stroke:0.1px}.sc{font-size:11.6px;letter-spacing:0}</style>
<div class="a" style="left:172px;top:19px;width:211px;height:740px;background:#f0f0f0;border:1px solid #979797"></div>
<div class="a" style="left:174.5px;top:22.0px;width:206px;height:18.5px;background:#3399ff"></div>
<div class="mt" style="left:191px;top:23.5px;color:#ffffff"><b>新建</b>(N)</div>
<svg style="left:370px;top:27.5px" width="5" height="7"><path d="M0 0L4 3.5L0 7Z" fill="#ffffff"/></svg>
<div class="mt" style="left:191px;top:42.0px;color:#000000"><b>复制</b><span style="letter-spacing:2px"> </span>CSS</div>
<div class="mt" style="left:191px;top:60.5px;color:#000000"><b>复制</b><span style="letter-spacing:2px"> </span>SVG</div>
<div class="mt" style="left:191px;top:79.0px;color:#000000"><b>复制图层</b>(D)...</div>
<div class="mt" style="left:191px;top:97.5px;color:#000000"><b>删除</b></div>
<svg style="left:370px;top:101.5px" width="5" height="7"><path d="M0 0L4 3.5L0 7Z" fill="#000000"/></svg>
<div class="a" style="left:175px;top:116.5px;width:205px;height:1px;background:#c6c6c6"></div>
<div class="mt" style="left:191px;top:124.0px;color:#000000"><b>快速导出为</b><span style="letter-spacing:2px"> </span>PNG</div>
<div class="mt sc" style="right:901px;top:124.5px;color:#000000">Shift+Ctrl+'</div>
<div class="mt" style="left:191px;top:142.5px;color:#000000"><b>导出为</b>...</div>
<div class="mt sc" style="right:901px;top:143.0px;color:#000000">Alt+Shift+Ctrl+'</div>
<div class="a" style="left:175px;top:161.5px;width:205px;height:1px;background:#c6c6c6"></div>
<div class="mt" style="left:191px;top:169.0px;color:#000000"><b>重命名图层</b>...</div>
<div class="mt" style="left:191px;top:187.5px;color:#000000"><b>图层样式</b>(Y)</div>
<svg style="left:370px;top:191.5px" width="5" height="7"><path d="M0 0L4 3.5L0 7Z" fill="#000000"/></svg>
<div class="mt" style="left:191px;top:206.0px;color:#8d8d8d"><b>智能滤镜</b></div>
<svg style="left:370px;top:211.5px" width="4" height="6"><path d="M0 0L3.5 3L0 6Z" fill="#8d8d8d"/></svg>
<div class="a" style="left:175px;top:225.0px;width:205px;height:1px;background:#c6c6c6"></div>
<div class="mt" style="left:191px;top:232.5px;color:#000000"><b>新建填充图层</b>(W)</div>
<svg style="left:370px;top:236.5px" width="5" height="7"><path d="M0 0L4 3.5L0 7Z" fill="#000000"/></svg>
<div class="mt" style="left:191px;top:251.0px;color:#000000"><b>新建调整图层</b>(J)</div>
<svg style="left:370px;top:255.0px" width="5" height="7"><path d="M0 0L4 3.5L0 7Z" fill="#000000"/></svg>
<div class="mt" style="left:191px;top:269.5px;color:#8d8d8d"><b>图层内容选项</b>(O)...</div>
<div class="a" style="left:175px;top:288.5px;width:205px;height:1px;background:#c6c6c6"></div>
<div class="mt" style="left:191px;top:296.0px;color:#000000"><b>图层蒙版</b>(M)</div>
<svg style="left:370px;top:300.0px" width="5" height="7"><path d="M0 0L4 3.5L0 7Z" fill="#000000"/></svg>
<div class="mt" style="left:191px;top:314.5px;color:#000000"><b>矢量蒙版</b>(V)</div>
<svg style="left:370px;top:318.5px" width="5" height="7"><path d="M0 0L4 3.5L0 7Z" fill="#000000"/></svg>
<div class="mt" style="left:191px;top:333.0px;color:#000000"><b>创建剪贴蒙版</b>(C)</div>
<div class="mt sc" style="right:901px;top:333.5px;color:#000000">Alt+Ctrl+G</div>
<div class="a" style="left:175px;top:352.0px;width:205px;height:1px;background:#c6c6c6"></div>
<div class="mt" style="left:191px;top:359.5px;color:#000000"><b>智能对象</b></div>
<svg style="left:370px;top:363.5px" width="5" height="7"><path d="M0 0L4 3.5L0 7Z" fill="#000000"/></svg>
<div class="mt" style="left:191px;top:378.0px;color:#000000"><b>视频图层</b></div>
<svg style="left:370px;top:382.0px" width="5" height="7"><path d="M0 0L4 3.5L0 7Z" fill="#000000"/></svg>
<div class="mt" style="left:191px;top:396.5px;color:#000000"><b>栅格化</b>(Z)</div>
<svg style="left:370px;top:400.5px" width="5" height="7"><path d="M0 0L4 3.5L0 7Z" fill="#000000"/></svg>
<div class="a" style="left:175px;top:415.5px;width:205px;height:1px;background:#c6c6c6"></div>
<div class="mt" style="left:191px;top:423.0px;color:#000000"><b>新建基于图层的切片</b>(B)</div>
<div class="a" style="left:175px;top:442.0px;width:205px;height:1px;background:#c6c6c6"></div>
<div class="mt" style="left:191px;top:449.5px;color:#000000"><b>图层编组</b>(G)</div>
<div class="mt sc" style="right:901px;top:450.0px;color:#000000">Ctrl+G</div>
<div class="mt" style="left:191px;top:468.0px;color:#8d8d8d"><b>取消图层编组</b>(U)</div>
<div class="mt sc" style="right:901px;top:468.5px;color:#8d8d8d">Shift+Ctrl+G</div>
<div class="mt" style="left:191px;top:486.5px;color:#000000"><b>隐藏图层</b>(R)</div>
<div class="mt sc" style="right:901px;top:487.0px;color:#000000">Ctrl+,</div>
<div class="a" style="left:175px;top:505.5px;width:205px;height:1px;background:#c6c6c6"></div>
<div class="mt" style="left:191px;top:513.0px;color:#000000"><b>排列</b>(A)</div>
<svg style="left:370px;top:517.0px" width="5" height="7"><path d="M0 0L4 3.5L0 7Z" fill="#000000"/></svg>
<div class="mt" style="left:191px;top:531.5px;color:#8d8d8d"><b>合并形状</b>(H)</div>
<svg style="left:370px;top:537.0px" width="4" height="6"><path d="M0 0L3.5 3L0 6Z" fill="#8d8d8d"/></svg>
<div class="a" style="left:175px;top:550.5px;width:205px;height:1px;background:#c6c6c6"></div>
<div class="mt" style="left:191px;top:558.0px;color:#000000"><b>将图层与选区对齐</b>(I)</div>
<svg style="left:370px;top:562.0px" width="5" height="7"><path d="M0 0L4 3.5L0 7Z" fill="#000000"/></svg>
<div class="mt" style="left:191px;top:576.5px;color:#8d8d8d"><b>分布</b>(T)</div>
<svg style="left:370px;top:582.0px" width="4" height="6"><path d="M0 0L3.5 3L0 6Z" fill="#8d8d8d"/></svg>
<div class="a" style="left:175px;top:595.5px;width:205px;height:1px;background:#c6c6c6"></div>
<div class="mt" style="left:191px;top:603.0px;color:#000000"><b>锁定图层</b>(L)...</div>
<div class="mt sc" style="right:901px;top:603.5px;color:#000000">Ctrl+/</div>
<div class="a" style="left:175px;top:622.0px;width:205px;height:1px;background:#c6c6c6"></div>
<div class="mt" style="left:191px;top:629.5px;color:#8d8d8d"><b>链接图层</b>(K)</div>
<div class="mt" style="left:191px;top:648.0px;color:#8d8d8d"><b>选择链接图层</b>(S)</div>
<div class="a" style="left:175px;top:667.0px;width:205px;height:1px;background:#c6c6c6"></div>
<div class="mt" style="left:191px;top:674.5px;color:#8d8d8d"><b>合并图层</b>(E)</div>
<div class="mt sc" style="right:901px;top:675.0px;color:#8d8d8d">Ctrl+E</div>
<div class="mt" style="left:191px;top:693.0px;color:#8d8d8d"><b>合并可见图层</b></div>
<div class="mt sc" style="right:901px;top:693.5px;color:#8d8d8d">Shift+Ctrl+E</div>
<div class="mt" style="left:191px;top:711.5px;color:#000000"><b>拼合图像</b>(F)</div>
<div class="a" style="left:175px;top:730.5px;width:205px;height:1px;background:#c6c6c6"></div>
<div class="mt" style="left:191px;top:738.0px;color:#8d8d8d"><b>修边</b></div>
<svg style="left:370px;top:743.5px" width="4" height="6"><path d="M0 0L3.5 3L0 6Z" fill="#8d8d8d"/></svg>
<div class="a" style="left:377px;top:19px;width:204px;height:178.5px;background:#f0f0f0;border:1px solid #979797"></div>
<div class="mt" style="left:397px;top:23.5px;color:#000000"><b>图层</b>(L)...</div>
<div class="mt sc" style="right:703px;top:24.0px;color:#000000">Shift+Ctrl+N</div>
<div class="mt" style="left:397px;top:42.0px;color:#000000"><b>背景图层</b>(B)...</div>
<div class="mt" style="left:397px;top:60.5px;color:#000000"><b>组</b>(G)...</div>
<div class="mt" style="left:397px;top:79.0px;color:#000000"><b>从图层建立组</b>(A)...</div>
<div class="mt" style="left:397px;top:97.5px;color:#000000"><b>画板</b>...</div>
<div class="mt" style="left:397px;top:116.0px;color:#8d8d8d"><b>来自图层组的画板</b>...</div>
<div class="mt" style="left:397px;top:134.5px;color:#000000"><b>来自图层的画板</b>...</div>
<div class="a" style="left:380px;top:153.5px;width:198px;height:1px;background:#c6c6c6"></div>
<div class="mt" style="left:397px;top:161.0px;color:#000000"><b>通过拷贝的图层</b></div>
<div class="mt sc" style="right:703px;top:161.5px;color:#000000">Ctrl+J</div>
<div class="a" style="left:379.5px;top:178.0px;width:199px;height:18.5px;background:#3399ff"></div>
<div class="mt" style="left:397px;top:179.5px;color:#ffffff"><b>通过剪切的图层</b></div>
<div class="mt sc" style="right:703px;top:180.0px;color:#ffffff">Shift+Ctrl+J</div>
<svg style="left:472px;top:183px" width="14" height="21"><path d="M1 1V16L4.5 12.5L7.5 19L10 18L7 11.5H12Z" fill="#fff" stroke="#000" stroke-width="1"/></svg>
</body></html>
